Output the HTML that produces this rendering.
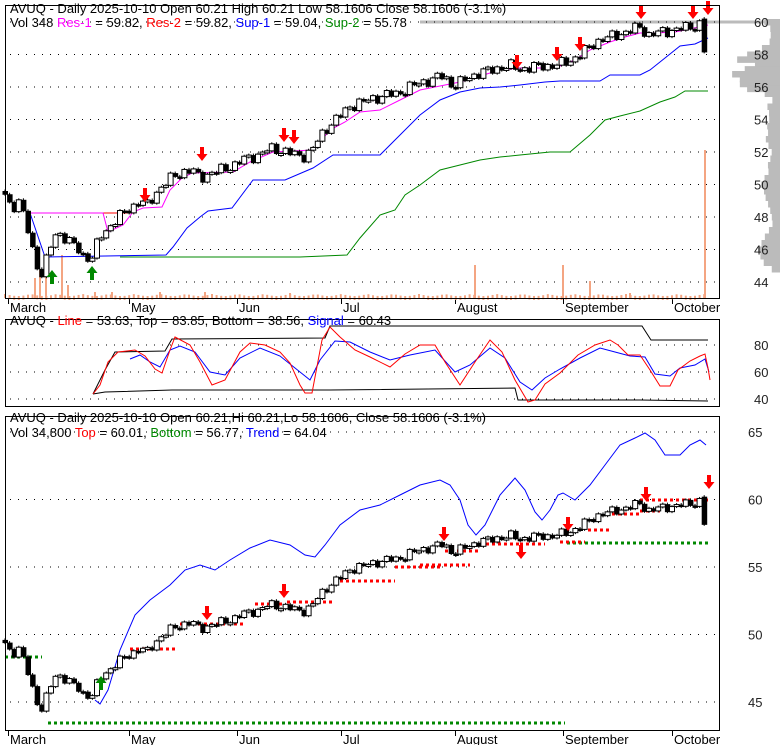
<!DOCTYPE html>
<html><head><meta charset="utf-8">
<style>
html,body{margin:0;padding:0;background:#fff;}
svg{display:block;font-family:"Liberation Sans",Arial,sans-serif;}
</style></head><body>
<svg id="s" width="780" height="745" viewBox="0 0 780 745" xmlns="http://www.w3.org/2000/svg">
<rect width="780" height="745" fill="#fff"/>
<g id="g"></g>
<rect x="5.5" y="5.5" width="714" height="293" fill="none" stroke="#000"/>
<rect x="5.5" y="319.5" width="714" height="87" fill="none" stroke="#000"/>
<rect x="5.5" y="416.5" width="714" height="314" fill="none" stroke="#000"/>
<text x="10" y="13" font-size="13">AVUQ - Daily 2025-10-10 Open 60.21  High 60.21  Low 58.1606  Close 58.1606  (-3.1%)</text>
<text x="10" y="27" font-size="13">Vol 348 <tspan fill="#f0f">Res-1</tspan> = 59.82, <tspan fill="#f00">Res-2</tspan> = 59.82, <tspan fill="#00f">Sup-1</tspan> = 59.04, <tspan fill="#080">Sup-2</tspan> = 55.78</text>
<text x="10" y="325" font-size="13">AVUQ - <tspan fill="#f00">Line</tspan> = 53.63, Top = 83.85, Bottom = 38.56, <tspan fill="#00f">Signal</tspan> = 60.43</text>
<text x="10" y="422" font-size="13">AVUQ - Daily 2025-10-10 Open 60.21,Hi 60.21,Lo 58.1606, Close 58.1606 (-3.1%)</text>
<text x="10" y="437" font-size="13">Vol 34,800 <tspan fill="#f00">Top</tspan> = 60.01, <tspan fill="#080">Bottom</tspan> = 56.77, <tspan fill="#00f">Trend</tspan> = 64.04</text>
</svg>
<script>
(function(){
var g=document.getElementById('g'),out=[];
function el(t,a){out.push('<'+t+' '+Object.keys(a).map(function(k){return k+'="'+a[k]+'"'}).join(' ')+'/>');}
function txt(x,y,s,sz,anchor,fill){out.push('<text x="'+x+'" y="'+y+'" font-size="'+(sz||13)+'"'+(anchor?' text-anchor="'+anchor+'"':'')+(fill?' fill="'+fill+'"':'')+'>'+s+'</text>');}
function pl(pts,c,w){out.push('<polyline fill="none" stroke="'+c+'" stroke-width="'+(w||1)+'" points="'+pts.map(function(p){return p[0]+','+p[1]}).join(' ')+'"/>');}
function interp(k,x){for(var i=0;i<k.length-1;i++){if(x>=k[i][0]&&x<=k[i+1][0]){var t=(x-k[i][0])/(k[i+1][0]-k[i][0]);return k[i][1]+t*(k[i+1][1]-k[i][1]);}}return x<k[0][0]?k[0][1]:k[k.length-1][1];}
function dots(y,x0,x1){out.push('<line x1="'+x0+'" y1="'+y+'" x2="'+x1+'" y2="'+y+'" stroke="#000" stroke-dasharray="1,7"/>');}
var y1=function(p){return 22+(60-p)*16.25}, y3=function(p){return 432+(65-p)*13.5}, y2=function(v){return 372-(v-60)*1.35};
var vp=[[60,18],[59.6,10],[59.2,14],[58.8,20],[58.4,30],[58,55],[57.7,70],[57.4,45],[57.1,60],[56.8,80],[56.5,75],[56.2,70],[55.9,50],[55.6,25],[55.2,15],[54.8,20],[54.4,12],[54,8],[53.6,10],[53.2,8],[52.8,14],[52.4,12],[52,10],[51.6,18],[51.2,20],[50.8,14],[50.4,18],[50,22],[49.6,16],[49.2,14],[48.8,12],[48.4,12],[48,14],[47.6,12],[47.2,14],[46.8,18],[46.4,22],[46,28],[45.6,24],[45.2,20],[44.8,8]];
vp.forEach(function(v){var y=y1(v[0]);var w=v[1]*0.5+Math.abs(Math.sin(v[0]*7))*8;el('rect',{x:780-w,y:y-3,width:w,height:6.5,fill:'#bbb'});});
el('rect',{x:420,y:20.5,width:360,height:3,fill:'#bbb'});
[60,58,56,54,52,50,48,46,44].forEach(function(p){dots(y1(p),10,719);txt(754,y1(p)+5,p,13,'start','#222');});
[80,60,40].forEach(function(v){dots(y2(v),10,719);txt(754,y2(v)+5,v,13,'start','#222');});
[65,60,55,50,45].forEach(function(p){dots(y3(p),10,719);txt(748,y3(p)+5,p,13,'start','#222');});
var mo=[[8,'March'],[129,'May'],[237,'Jun'],[341,'Jul'],[455,'August'],[563,'September'],[672,'October']];
mo.forEach(function(m){[[298,312],[730,744]].forEach(function(b){el('line',{x1:m[0]+0.5,y1:b[0],x2:m[0]+0.5,y2:b[0]+6,stroke:'#000'});txt(m[0]+2,b[1],m[1],13,null,'#000');});});
var K=[[5,49.4],[12,48.6],[20,48.9],[28,47.2],[36,45.2],[42,44.4],[48,45.6],[54,46.9],[60,47],[68,46.5],[76,46.2],[84,45.6],[92,45.4],[100,46.8],[108,47.3],[116,47.8],[124,48.3],[132,48.6],[140,49],[148,48.7],[156,49.5],[164,50],[174,50.5],[184,50.8],[192,50.9],[200,50.4],[210,50.7],[222,50.9],[234,51.2],[246,51.6],[258,51.8],[270,52.2],[282,52.1],[292,51.9],[302,51.7],[312,52.1],[320,52.9],[330,53.7],[340,54.2],[350,54.8],[362,55.1],[374,55.3],[386,55.5],[398,55.6],[410,56],[422,56.3],[434,56.5],[444,56.7],[452,56.1],[462,56.3],[470,56.6],[480,56.9],[490,57],[500,57.2],[510,57.3],[520,57.1],[530,57.2],[540,57.3],[550,57.3],[560,57.4],[570,57.6],[580,58],[590,58.5],[600,58.9],[612,59.1],[622,59.3],[632,59.5],[640,59.7],[648,59.2],[656,59.3],[664,59.4],[672,59.5],[682,59.6],[692,59.7],[700,59.9],[705,60.1]];
var N=153,xs=[],cl=[];
for(var i=0;i<N;i++){var x=5+i*4.6;xs.push(x);var n=Math.sin(i*2.3)*0.25+Math.sin(i*5.1)*0.15;cl.push(interp(K,x)+n);}
var vb=[[35,278],[40,270],[46,275],[62,255],[68,285],[95,292],[112,292],[160,292],[205,292],[290,293],[475,265],[563,265],[590,281],[630,293],[705,150]];
for(var i=0;i<N;i++){el('rect',{x:xs[i]-1,y:294+Math.abs(Math.sin(i*3.7))*2,width:2,height:4,fill:'#f4a582'});}
vb.forEach(function(v){el('rect',{x:v[0]-1,y:v[1],width:2,height:298-v[1],fill:'#f4a582'});});
// panel1 lines
pl([[120,257],[300,257],[347,255],[360,238],[380,215],[395,210],[405,195],[420,185],[440,170],[460,165],[480,160],[500,157],[520,155],[550,152],[570,152],[590,135],[605,120],[620,116],[640,111],[660,102],[675,97],[685,91],[708,91]],'#080');
pl([[30,213],[45,257],[166,255],[173,247],[187,228],[200,217],[208,211],[232,208],[253,180],[285,180],[313,168],[333,155],[380,155],[400,135],[420,115],[440,100],[460,92],[480,88],[500,87],[520,85],[545,82],[560,81],[600,81],[610,75],[640,75],[650,70],[665,58],[680,46],[695,44],[708,38]],'#00f');
pl([[103,213],[133,213]],'#f00');
pl([[30,213],[103,213],[108,232],[123,225],[133,212],[143,208],[162,207],[170,190],[182,178],[192,173],[233,172],[250,162],[273,152],[313,150],[330,130],[345,122],[360,112],[380,110],[400,100],[420,90],[440,86],[460,82],[480,76],[500,70],[520,68],[545,68],[560,66],[575,60],[590,50],[610,42],[625,37],[640,33],[655,33],[675,32],[690,29],[708,25]],'#f0f');
function candles(yf){for(var i=0;i<N;i++){var o=i?cl[i-1]:cl[0]+0.2,c=cl[i];if(i==N-1){o=60.21;c=58.16;}var hi=Math.max(o,c),lo=Math.min(o,c);var yt=yf(hi),yb=yf(lo);if(yb-yt<2){yb=yt+2;}var up=c>=o;
el('line',{x1:xs[i],y1:yt-1.5,x2:xs[i],y2:yb+1.5,stroke:'#000'});
if(up)el('rect',{x:xs[i]-2.5,y:yt,width:5,height:yb-yt,fill:'#fff',stroke:'#000'});else el('rect',{x:xs[i]-2.5,y:yt,width:5.5,height:yb-yt+0.5,fill:'#000'});}}
candles(y1);
function dn(x,y){out.push('<path d="M'+(x-2)+' '+y+'h4v7h3.5l-5.5,7l-5.5,-7h3.5z" fill="#f00"/>');}
function upA(x,y){out.push('<path d="M'+(x-2)+' '+(y+14)+'h4v-7h3.5l-5.5,-7l-5.5,7h3.5z" fill="#080"/>');}
[[145,188],[202,147],[284,128],[294,130],[517,55],[557,47],[580,37],[641,5],[693,5],[708,1]].forEach(function(a){dn(a[0],a[1]);});
[[52,270],[92,266]].forEach(function(a){upA(a[0],a[1]);});
pl([[93,394],[105,392],[172,390],[330,390],[515,388],[518,400],[640,400],[708,401]],'#000');
pl([[93,394],[105,370],[115,352],[165,351],[172,339],[325,338],[330,326],[642,326],[651,340],[708,340]],'#000');
pl([[130,359],[140,355],[150,362],[160,367],[170,350],[180,346],[195,352],[210,372],[225,375],[240,358],[260,348],[280,356],[295,368],[310,380],[320,360],[335,341],[350,342],[370,352],[390,360],[410,355],[435,350],[455,372],[470,365],[490,348],[505,358],[520,382],[532,390],[545,378],[560,369],[580,358],[600,348],[615,352],[630,356],[645,357],[655,374],[670,376],[680,368],[695,365],[705,359],[709,372]],'#00f');
pl([[93,394],[100,385],[108,362],[118,352],[135,350],[145,356],[155,369],[162,373],[170,350],[175,337],[190,345],[200,362],[212,385],[225,380],[240,352],[250,343],[265,345],[280,352],[290,363],[300,385],[305,393],[312,393],[322,340],[330,327],[340,337],[355,350],[370,357],[390,367],[405,354],[420,345],[435,345],[445,362],[460,385],[475,362],[490,340],[502,352],[515,380],[528,402],[535,400],[545,384],[560,373],[578,355],[595,345],[610,340],[618,345],[628,355],[640,355],[650,370],[660,386],[670,386],[678,370],[690,361],[700,356],[705,354],[708,368],[710,380]],'#f00');
pl([[95,700],[100,704],[108,690],[120,650],[135,615],[150,600],[170,585],[185,570],[200,565],[215,570],[230,560],[250,548],[270,540],[290,545],[305,555],[315,557],[325,545],[340,525],[360,510],[380,505],[400,495],[420,485],[440,480],[450,485],[460,500],[468,525],[476,535],[485,525],[500,495],[515,478],[525,490],[535,512],[542,520],[550,510],[558,495],[563,493],[575,500],[590,485],[605,465],[620,445],[635,438],[645,433],[655,440],[665,455],[680,455],[690,445],[700,440],[706,445]],'#00f');
function dotted(x0,x1,y,c){out.push('<line x1="'+x0+'" y1="'+y+'" x2="'+x1+'" y2="'+y+'" stroke="'+c+'" stroke-width="3" stroke-dasharray="3,3"/>');}
dotted(5,42,657,'#080');dotted(48,565,723,'#080');dotted(567,709,543,'#080');
[[130,178,649],[180,245,624],[255,282,604],[287,335,602],[340,395,581],[395,440,567],[420,470,565],[445,480,551],[480,520,544],[520,545,544],[560,585,542],[588,610,530],[612,640,514],[640,660,511],[640,708,500]].forEach(function(d){dotted(d[0],d[1],d[2],'#f00');});
candles(y3);
[[207,606],[284,584],[444,527],[521,545],[568,517],[646,487],[709,475]].forEach(function(a){dn(a[0],a[1]);});
upA(101,676);
g.innerHTML=out.join('');
})();
</script>
</body></html>
